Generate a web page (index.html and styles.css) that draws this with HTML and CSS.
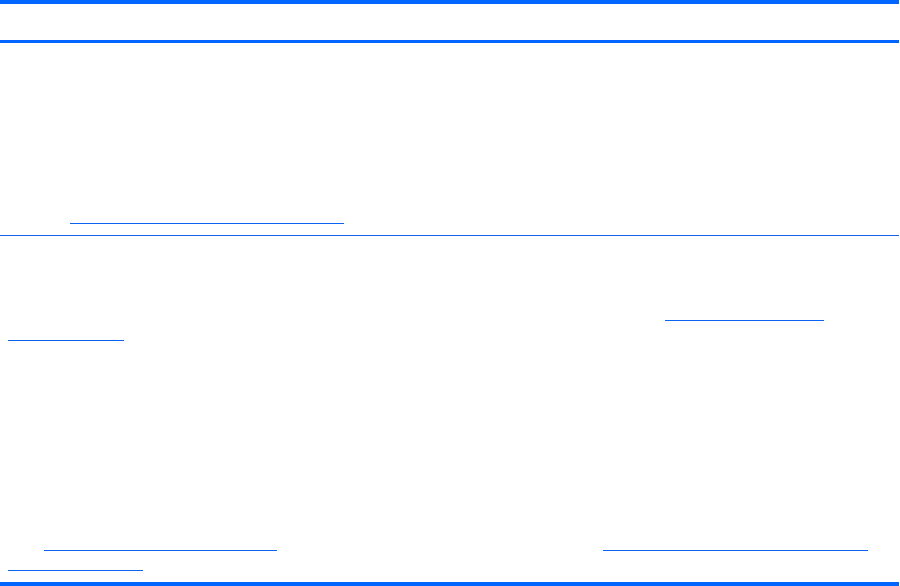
FILE: index.html
```html
<!DOCTYPE html>
<html lang="en">

<head>
    <meta charset="UTF-8">
    <meta name="viewport" content="width=device-width, initial-scale=1.0">
    <title>Document page</title>
    <link rel="stylesheet" href="styles.css">
</head>

<body>
    <div class="page">
        <!-- Cabeçalho da tabela -->
        <div class="rule-top"></div>
        <div class="table-head"></div>
        <div class="rule-head"></div>

        <!-- Primeira linha -->
        <div class="table-row row-one">
            <div class="line">
                <a href="#" class="link link-a"></a>
            </div>
        </div>
        <div class="rule-thin"></div>

        <!-- Segunda linha -->
        <div class="table-row row-two">
            <div class="para para-first">
                <div class="line">
                    <a href="#" class="link link-b"></a>
                </div>
                <div class="line">
                    <a href="#" class="link link-c"></a>
                </div>
            </div>
            <div class="para para-last">
                <div class="line">
                    <a href="#" class="link link-d"></a>
                    <a href="#" class="link link-e"></a>
                </div>
                <div class="line">
                    <a href="#" class="link link-f"></a>
                </div>
            </div>
        </div>
        <div class="rule-bottom"></div>
    </div>
</body>

</html>
```

FILE: styles.css
```css
/* Resetando alguns estilos padrões */
* {
    margin: 0;
    padding: 0;
    box-sizing: border-box;
}

body {
    font-family: 'Liberation Sans', Arial, sans-serif;
    background-color: #fff;
    color: #000;
}

.page {
    width: 899px;
}

/* Réguas da tabela */
.rule-top {
    height: 4px;
    background-color: #0066ff;
}

.table-head {
    height: 36px;
}

.rule-head {
    height: 3px;
    background-color: #0066ff;
}

.rule-thin {
    height: 1px;
    background-color: #1463e8;
}

.rule-bottom {
    height: 4px;
    background-color: #0066ff;
}

/* Linhas */
.row-one {
    padding-top: 161px;
    padding-bottom: 11px;
}

.row-two {
    padding-top: 65px;
    padding-bottom: 11px;
}

.para-last {
    margin-top: 190px;
}

.line {
    height: 20px;
    display: flex;
    align-items: flex-end;
}

.link {
    display: block;
    height: 1px;
    background-color: #0a64f0;
}

.link-a {
    margin-left: 70px;
    width: 274px;
}

.link-b {
    margin-left: 665px;
    width: 159px;
}

.link-c {
    margin-left: 8px;
    width: 116px;
}

.link-d {
    margin-left: 44px;
    width: 233px;
}

.link-e {
    margin-left: 326px;
    width: 265px;
}

.link-f {
    margin-left: 8px;
    width: 135px;
}
```
